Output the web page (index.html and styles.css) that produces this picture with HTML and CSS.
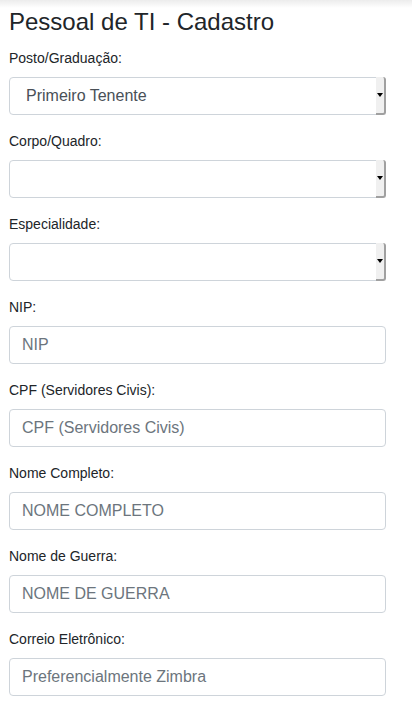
FILE: index.html
```html
<!DOCTYPE html>
<html lang="pt-BR">
<head>
<meta charset="utf-8">
<title>Pessoal de TI - Cadastro</title>
<link rel="stylesheet" href="styles.css">
</head>
<body>
<div class="topshade"></div>
<main class="page">
  <h4 class="title">Pessoal de TI - Cadastro</h4>
  <form class="form">
    <div class="group">
      <label class="label">Posto/Graduação:</label>
      <div class="select"><span class="value">Primeiro Tenente</span><span class="arrow"><span class="tri"></span></span></div>
    </div>
    <div class="group">
      <label class="label">Corpo/Quadro:</label>
      <div class="select"><span class="value"></span><span class="arrow"><span class="tri"></span></span></div>
    </div>
    <div class="group">
      <label class="label">Especialidade:</label>
      <div class="select"><span class="value"></span><span class="arrow"><span class="tri"></span></span></div>
    </div>
    <div class="group">
      <label class="label">NIP:</label>
      <div class="input"><span class="ph">NIP</span></div>
    </div>
    <div class="group">
      <label class="label">CPF (Servidores Civis):</label>
      <div class="input"><span class="ph">CPF (Servidores Civis)</span></div>
    </div>
    <div class="group">
      <label class="label">Nome Completo:</label>
      <div class="input"><span class="ph">NOME COMPLETO</span></div>
    </div>
    <div class="group">
      <label class="label">Nome de Guerra:</label>
      <div class="input"><span class="ph">NOME DE GUERRA</span></div>
    </div>
    <div class="group">
      <label class="label">Correio Eletrônico:</label>
      <div class="input"><span class="ph">Preferencialmente Zimbra</span></div>
    </div>
  </form>
</main>
</body>
</html>
```
FILE: styles.css
```css
html, body {
  margin: 0;
  padding: 0;
  background: #fff;
}
body {
  font-family: "Liberation Sans", Arial, sans-serif;
  color: #212529;
  position: relative;
}
.topshade {
  position: absolute;
  top: 0;
  left: 0;
  right: 0;
  height: 8px;
  background: linear-gradient(#ececec, rgba(255,255,255,0));
  pointer-events: none;
}
.page {
  padding: 8px 26px 0 9px;
}
.title {
  margin: 0 0 12px 0;
  font-size: 24px;
  font-weight: 400;
  line-height: 28px;
  color: #212529;
}
.form {
  display: flex;
  flex-direction: column;
  gap: 16px;
}
.group {
  display: flex;
  flex-direction: column;
  gap: 8px;
}
.label {
  font-size: 14px;
  line-height: 21px;
  color: #212529;
}
.select, .input {
  box-sizing: border-box;
  height: 38px;
  border: 1px solid #ced4da;
  border-radius: 4px;
  display: flex;
  align-items: center;
  font-size: 16px;
  background: #fff;
}
.select {
  padding-left: 16px;
  justify-content: space-between;
}
.value {
  color: #495057;
}
.arrow {
  align-self: stretch;
  width: 8px;
  margin: 0 0 0 0;
  background: #f0f0f0;
  border-right: 2px solid #a0a0a0;
  border-bottom: 2px solid #a0a0a0;
  border-radius: 0 3px 3px 0;
  display: flex;
  align-items: center;
  justify-content: center;
  margin-top: -1px;
  margin-bottom: -1px;
  margin-right: -1px;
}
.tri {
  width: 0;
  height: 0;
  border-left: 3px solid transparent;
  border-right: 3px solid transparent;
  border-top: 4px solid #000;
}
.input {
  padding-left: 12px;
}
.ph {
  color: #6c757d;
}
```
